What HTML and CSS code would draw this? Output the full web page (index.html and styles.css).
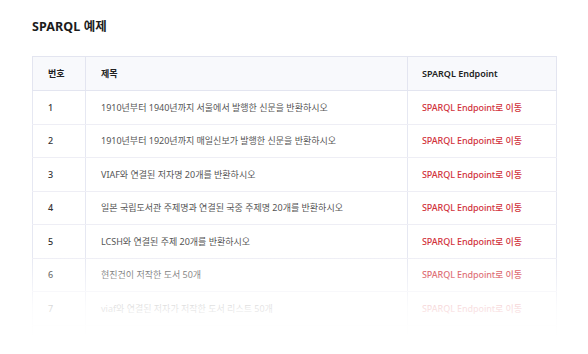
FILE: index.html
```html
<!DOCTYPE html>
<html lang="ko">
<head>
<meta charset="utf-8">
<link rel="stylesheet" href="styles.css">
</head>
<body>
<div class="page">
  <h2 class="title">SPARQL 예제</h2>
  <div class="table-wrap">
    <table class="examples">
      <colgroup><col class="col-no"><col class="col-title"><col class="col-link"></colgroup>
      <thead>
        <tr><th class="c-no">번호</th><th class="c-title">제목</th><th class="c-link">SPARQL Endpoint</th></tr>
      </thead>
      <tbody>
        <tr><td class="c-no">1</td><td class="c-title">1910년부터 1940년까지 서울에서 발행한 신문을 반환하시오</td><td class="c-link"><a>SPARQL Endpoint로 이동</a></td></tr>
        <tr><td class="c-no">2</td><td class="c-title">1910년부터 1920년까지 매일신보가 발행한 신문을 반환하시오</td><td class="c-link"><a>SPARQL Endpoint로 이동</a></td></tr>
        <tr><td class="c-no">3</td><td class="c-title">VIAF와 연결된 저자명 20개를 반환하시오</td><td class="c-link"><a>SPARQL Endpoint로 이동</a></td></tr>
        <tr><td class="c-no">4</td><td class="c-title">일본 국립도서관 주제명과 연결된 국중 주제명 20개를 반환하시오</td><td class="c-link"><a>SPARQL Endpoint로 이동</a></td></tr>
        <tr><td class="c-no">5</td><td class="c-title">LCSH와 연결된 주제 20개를 반환하시오</td><td class="c-link"><a>SPARQL Endpoint로 이동</a></td></tr>
        <tr><td class="c-no">6</td><td class="c-title">현진건이 저작한 도서 50개</td><td class="c-link"><a>SPARQL Endpoint로 이동</a></td></tr>
        <tr><td class="c-no">7</td><td class="c-title">viaf와 연결된 저자가 저작한 도서 리스트 50개</td><td class="c-link"><a>SPARQL Endpoint로 이동</a></td></tr>
        <tr><td class="c-no">8</td><td class="c-title">국립중앙도서관 소장 자료 중 주제명이 연결된 도서 50개</td><td class="c-link"><a>SPARQL Endpoint로 이동</a></td></tr>
      </tbody>
    </table>
    <div class="fade"></div>
  </div>
</div>
</body>
</html>
```

FILE: styles.css
```css
html, body {
  margin: 0;
  padding: 0;
  background: #ffffff;
  overflow: hidden;
}
.page {
  padding: 18px 32px 0 32px;
  font-family: "Noto Sans", "Noto Sans CJK KR", sans-serif;
}
.title {
  margin: 0 0 20px 0;
  font-family: "Noto Sans", "Noto Sans CJK KR", sans-serif;
  font-size: 12.5px;
  font-weight: 700;
  color: #1c1c1c;
  line-height: 18px;
  letter-spacing: 0.1px;
}
.table-wrap {
  position: relative;
  width: 525px;
}
.examples {
  width: 100%;
  border-collapse: collapse;
  table-layout: fixed;
  font-size: 9px;
}
.col-no { width: 53px; }
.col-title { width: 322px; }
.examples th, .examples td {
  box-sizing: border-box;
  border: 1px solid #e9eaf3;
  height: 33.5px;
  padding: 0 0 0 14px;
  text-align: left;
  vertical-align: middle;
  white-space: nowrap;
  overflow: hidden;
}
.examples th {
  background: #f8f9fc;
  font-weight: 600;
  color: #222;
  border-color: #e3e5f0;
  height: 34px;
}
.examples td {
  color: #555;
  border-left-color: #e6e8f2;
  border-right-color: #e6e8f2;
  border-top-color: #eeeef5;
  border-bottom-color: #eeeef5;
}
.c-no { padding-left: 15px !important; }
.c-title { padding-left: 15px !important; }
.c-link { padding-left: 14px !important; }
td.c-no { color: #333; font-weight: 500; }
.examples a {
  color: #d1323b;
  font-weight: 500;
  letter-spacing: -0.1px;
  text-decoration: none;
}
.fade {
  position: absolute;
  left: -4px;
  right: -4px;
  top: 199px;
  height: 110px;
  background: linear-gradient(to bottom, rgba(255,255,255,0) 0%, rgba(255,255,255,0.3) 18%, rgba(255,255,255,0.85) 48%, #ffffff 75%, #ffffff 100%);
  pointer-events: none;
}
```
